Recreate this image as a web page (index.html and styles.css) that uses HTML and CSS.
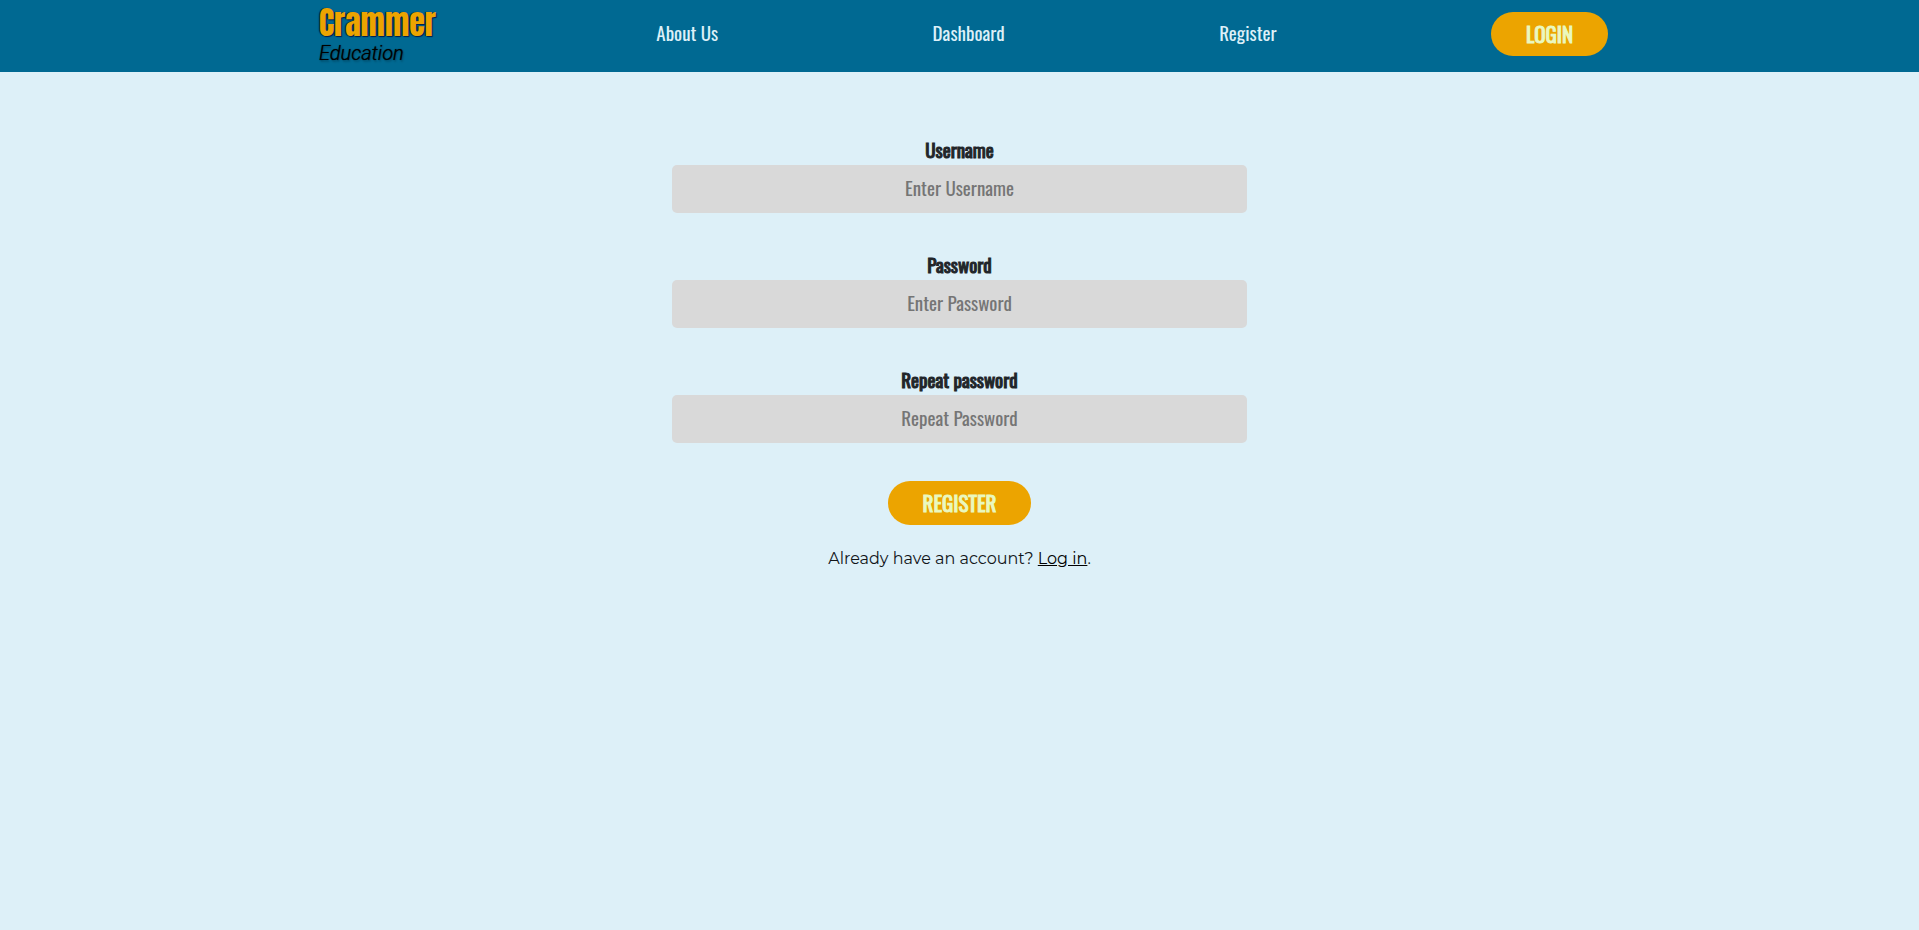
FILE: index.html
```html
<!DOCTYPE html>
<html lang="en">
<head>
  <meta charset="utf-8">
  <meta name="viewport" content="width=device-width, initial-scale=1">
  <title>Crammer Education - Register</title>
  <link rel="stylesheet" href="styles.css">
</head>
<body>
  <header class="site-header">
    <nav class="nav">
      <a class="logo" href="#"><span class="logo-name">Crammer</span><span class="logo-sub">Education</span></a>
      <a class="nav-link" href="#">About Us</a>
      <a class="nav-link" href="#">Dashboard</a>
      <a class="nav-link" href="#">Register</a>
      <button class="button button-login" type="button">LOGIN</button>
    </nav>
  </header>
  <main class="page">
    <form class="form">
      <div class="field">
        <label class="label" for="username">Username</label>
        <input class="input" id="username" type="text" placeholder="Enter Username">
      </div>
      <div class="field">
        <label class="label" for="password">Password</label>
        <input class="input" id="password" type="password" placeholder="Enter Password">
      </div>
      <div class="field">
        <label class="label" for="repeat">Repeat password</label>
        <input class="input" id="repeat" type="password" placeholder="Repeat Password">
      </div>
      <button class="button" type="submit">REGISTER</button>
      <p class="note">Already have an account? <a class="note-link" href="#">Log in</a>.</p>
    </form>
  </main>
</body>
</html>
```
FILE: styles.css
```css
* {
  box-sizing: border-box;
}

body {
  margin: 0;
  background: #ddf0f8;
  color: #212529;
  font-family: Oswald, "Liberation Sans Narrow", "Liberation Sans", sans-serif;
  font-size: 19px;
}

.site-header {
  background: #006992;
  padding: 0 16.2%;
}

.nav {
  display: flex;
  align-items: center;
  justify-content: space-between;
  height: 72px;
}

.logo {
  display: flex;
  flex-direction: column;
  gap: 2px;
  width: 131px;
  padding: 0 0 2px 8px;
  text-decoration: none;
}

.logo-name {
  font-family: Anton, "Liberation Sans Narrow", sans-serif;
  font-size: 32px;
  line-height: 34px;
  color: #eca400;
  text-shadow: 1px 1px 1px #001d4a, -1px 0 1px #001d4a;
}

.logo-sub {
  font-family: Roboto, "Liberation Sans", sans-serif;
  font-size: 20px;
  font-style: italic;
  font-weight: 300;
  line-height: 22px;
  color: #000;
  text-shadow: 0 0 1px #000, 1px 2px 2px #00000040;
}

.nav-link {
  padding-bottom: 8px;
  color: #ddf0f8;
  text-decoration: none;
  white-space: nowrap;
}

.button {
  height: 44px;
  padding: 0 35px 2px;
  border: 0;
  border-radius: 22px;
  background: #eca400;
  color: #eaf8bf;
  font-family: inherit;
  font-size: 21px;
  -webkit-text-stroke: 1px #eaf8bf;
  cursor: pointer;
}

.button-login {
  margin-bottom: 4px;
}

.page {
  padding-top: 63px;
}

.form {
  display: flex;
  flex-direction: column;
  align-items: center;
  width: 30%;
  margin: 0 auto;
}

.field {
  display: flex;
  flex-direction: column;
  width: 100%;
  margin-bottom: 37px;
}

.field:last-of-type {
  margin-bottom: 38px;
}

.label {
  padding-bottom: 2px;
  line-height: 28px;
  text-align: center;
  -webkit-text-stroke: 1px #212529;
}

.input {
  width: 100%;
  height: 48px;
  padding: 0 12px 4px;
  border: 0;
  border-radius: 5px;
  background: #d9d9d9;
  color: #212529;
  font-family: inherit;
  font-size: 19px;
  text-align: center;
}

.input::placeholder {
  color: #757575;
}

.note {
  margin: 22px 0 0;
  color: #111518;
  font-family: Montserrat, Inter, sans-serif;
  font-size: 16px;
  line-height: 24px;
  white-space: nowrap;
}

.note-link {
  color: #000;
}
```
